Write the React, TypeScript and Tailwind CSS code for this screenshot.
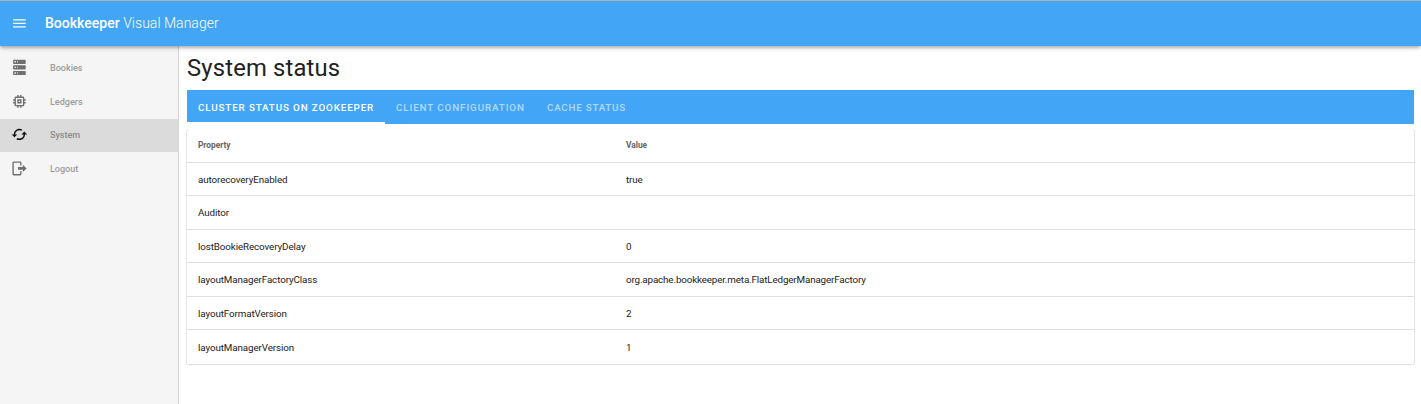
const ICONS = {
  menu: "M3 18h18v-2H3v2zm0-5h18v-2H3v2zm0-7v2h18V6H3z",
  server:
    "M4,1H20A1,1 0 0,1 21,2V6A1,1 0 0,1 20,7H4A1,1 0 0,1 3,6V2A1,1 0 0,1 4,1M4,9H20A1,1 0 0,1 21,10V14A1,1 0 0,1 20,15H4A1,1 0 0,1 3,14V10A1,1 0 0,1 4,9M4,17H20A1,1 0 0,1 21,18V22A1,1 0 0,1 20,23H4A1,1 0 0,1 3,22V18A1,1 0 0,1 4,17M9,5H10V3H9V5M9,13H10V11H9V13M9,21H10V19H9V21M5,3V5H7V3H5M5,11V13H7V11H5M5,19V21H7V19H5Z",
  memory:
    "M15 9H9v6h6V9zm-2 4h-2v-2h2v2zm8-2V9h-2V7c0-1.1-.9-2-2-2h-2V3h-2v2h-2V3H9v2H7c-1.1 0-2 .9-2 2v2H3v2h2v2H3v2h2v2c0 1.1.9 2 2 2h2v2h2v-2h2v2h2v-2h2c1.1 0 2-.9 2-2v-2h2v-2h-2v-2h2zm-4 6H7V7h10v10z",
  cached:
    "M19 8l-4 4h3c0 3.31-2.69 6-6 6-1.01 0-1.97-.25-2.8-.7l-1.46 1.46C8.97 19.54 10.43 20 12 20c4.42 0 8-3.58 8-8h3l-4-4zM6 12c0-3.31 2.69-6 6-6 1.01 0 1.97.25 2.8.7l1.46-1.46C15.03 4.46 13.57 4 12 4c-4.42 0-8 3.58-8 8H1l4 4 4-4H6z",
  logout:
    "M17,17.25V14H10V10H17V6.75L22.25,12L17,17.25M13,2A2,2 0 0,1 15,4V8H13V4H4V20H13V16H15V20A2,2 0 0,1 13,22H4A2,2 0 0,1 2,20V4A2,2 0 0,1 4,2H13Z",
};

function Icon({ path }: { path: string }) {
  return (
    <svg viewBox="0 0 24 24" className="size-[16.8px] shrink-0 fill-current">
      <path d={path} />
    </svg>
  );
}

const NAV = [
  { label: "Bookies", icon: ICONS.server },
  { label: "Ledgers", icon: ICONS.memory },
  { label: "System", icon: ICONS.cached, active: true },
  { label: "Logout", icon: ICONS.logout },
];

const ROWS = [
  ["autorecoveryEnabled", "true"],
  ["Auditor", ""],
  ["lostBookieRecoveryDelay", "0"],
  ["layoutManagerFactoryClass", "org.apache.bookkeeper.meta.FlatLedgerManagerFactory"],
  ["layoutFormatVersion", "2"],
  ["layoutManagerVersion", "1"],
];

export default function App() {
  return (
    <div className="flex h-[404px] flex-col overflow-hidden bg-white font-['Roboto',sans-serif] text-[#212121]">
      <header className="relative z-10 flex h-[46px] shrink-0 items-center border-t border-[#b0b0b0] bg-[#42a5f5] pl-[11.2px] text-white shadow-[0_1.4px_2.8px_-0.7px_rgba(0,0,0,0.2),0_2.8px_3.5px_rgba(0,0,0,0.14),0_0.7px_7px_rgba(0,0,0,0.12)]">
        <div className="pb-px">
          <Icon path={ICONS.menu} />
        </div>
        <div className="ml-[17px] text-[14px] leading-[21px] tracking-[0.02px]">
          <span className="font-medium">Bookkeeper</span>{" "}
          <span className="font-light">Visual Manager</span>
        </div>
      </header>
      <div className="flex min-h-0 flex-1">
        <nav className="w-[179px] shrink-0 border-r border-[#d4d4d4] bg-[#f5f5f5] pt-[5.6px]">
          {NAV.map((item) => (
            <div
              key={item.label}
              className={
                item.active
                  ? "flex h-[33.6px] items-center bg-[#dbdbdb] pl-[11.2px] text-[#111111]"
                  : "flex h-[33.6px] items-center pl-[11.2px] text-[#6f6f6f]"
              }
            >
              <div className={item.active ? "pb-[2px]" : "pb-[1px]"}>
                <Icon path={item.icon} />
              </div>
              <span
                className={
                  item.active
                    ? "ml-[22px] pt-[0.4px] text-[9.1px] font-medium tracking-[-0.05px] text-[#8c8c8c]"
                    : "ml-[22px] pt-[0.8px] text-[9.1px] font-medium tracking-[-0.03px] text-[#9d9d9d]"
                }
              >
                {item.label}
              </span>
            </div>
          ))}
        </nav>
        <main className="flex min-w-0 flex-1 flex-col pr-[7px] pl-[8px]">
          <h1 className="mt-[8px] h-[36px] text-[23.8px] leading-[28px] tracking-[0.175px]">System status</h1>
          <div className="flex h-[34px] shrink-0 bg-[#42a5f5] text-[9.8px] font-medium tracking-[0.87px] text-white/60">
            <div className="flex w-[198px] items-center border-b-2 border-white pt-[4px] pl-[11px] whitespace-nowrap text-white">
              CLUSTER STATUS ON ZOOKEEPER
            </div>
            <div className="flex w-[151px] items-center pt-[2px] pl-[11px] tracking-[0.9px] whitespace-nowrap">CLIENT CONFIGURATION</div>
            <div className="flex items-center pt-[2px] pl-[11px] tracking-[0.76px] whitespace-nowrap">CACHE STATUS</div>
          </div>
          <div className="mt-[5px] rounded-[3px] shadow-[1px_0_0_#e6e6e6,-1px_0_0_#e6e6e6,0_0_1px_rgba(0,0,0,0.15)]">
            <div className="grid h-[33.8px] grid-cols-[428px_1fr] items-center border-b border-[#dfdfdf] px-[11px] text-[8.4px] font-bold tracking-[-0.03px] text-[#666666]">
              <span>Property</span>
              <span>Value</span>
            </div>
            {ROWS.map(([property, value]) => (
              <div
                key={property}
                className="grid h-[33.5px] grid-cols-[428px_1fr] items-center border-b border-[#dfdfdf] px-[11px] pt-[1.6px] text-[9.8px] last:h-[34.7px] last:rounded-b-[3px]"
              >
                <span className="tracking-[-0.1px]">{property}</span>
                <span className="tracking-[-0.135px]">{value}</span>
              </div>
            ))}
          </div>
        </main>
      </div>
    </div>
  );
}
